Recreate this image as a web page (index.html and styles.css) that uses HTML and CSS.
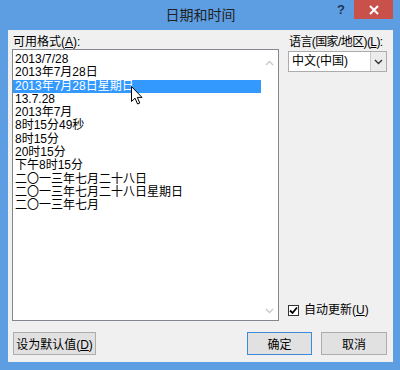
FILE: index.html
```html
<!DOCTYPE html>
<html lang="zh-CN">

<head>
    <meta charset="UTF-8">
    <title>日期和时间</title>
    <link rel="stylesheet" href="styles.css">
</head>

<body>
    <div class="window">
        <div class="titlebar">
            <span></span>
            <span class="title">日期和时间</span>
            <div class="controls">
                <span class="help">?</span>
                <span class="close">
                    <svg width="10" height="10" viewBox="0 0 10 10">
                        <path d="M1 1 L9 9 M9 1 L1 9" stroke="#fff" stroke-width="2" />
                    </svg>
                </span>
            </div>
        </div>

        <div class="client">
            <div class="main">
                <div class="left">
                    <div class="label">可用格式(<u>A</u>):</div>
                    <div class="listbox">
                        <ul class="formats">
                            <li>2013/7/28</li>
                            <li>2013年7月28日</li>
                            <li class="selected">2013年7月28日星期日</li>
                            <li>13.7.28</li>
                            <li>2013年7月</li>
                            <li>8时15分49秒</li>
                            <li>8时15分</li>
                            <li>20时15分</li>
                            <li>下午8时15分</li>
                            <li>二〇一三年七月二十八日</li>
                            <li>二〇一三年七月二十八日星期日</li>
                            <li>二〇一三年七月</li>
                        </ul>
                        <div class="scrollbar">
                            <svg width="9" height="6" viewBox="0 0 9 6">
                                <path d="M1 5 L4.5 1.5 L8 5" fill="none" stroke="#c8c8c8" stroke-width="1.3" />
                            </svg>
                            <svg width="9" height="6" viewBox="0 0 9 6">
                                <path d="M1 1 L4.5 4.5 L8 1" fill="none" stroke="#c8c8c8" stroke-width="1.3" />
                            </svg>
                        </div>
                    </div>
                </div>

                <div class="right">
                    <div class="label label-tight">语言(国家/地区)(<u>L</u>):</div>
                    <div class="select">
                        <span class="select-value">中文(中国)</span>
                        <span class="select-arrow">
                            <svg width="9" height="6" viewBox="0 0 9 6">
                                <path d="M1 1 L4.5 4.5 L8 1" fill="none" stroke="#333" stroke-width="1.4" />
                            </svg>
                        </span>
                    </div>
                    <div class="spacer"></div>
                    <label class="check">
                        <span class="box">
                            <svg width="9" height="9" viewBox="0 0 9 9">
                                <path d="M1 4.5 L3.5 7 L8 1.5" fill="none" stroke="#000" stroke-width="1.8" />
                            </svg>
                        </span>
                        <span>自动更新(<u>U</u>)</span>
                    </label>
                </div>
            </div>

            <div class="buttons">
                <button class="btn btn-wide">设为默认值(<u>D</u>)</button>
                <div class="spacer"></div>
                <button class="btn btn-default">确定</button>
                <button class="btn">取消</button>
            </div>

            <svg class="cursor" width="12" height="19" viewBox="0 0 12 19">
                <path d="M0.5 0.5 L0.5 15.5 L4 12.2 L6.6 18 L8.8 17 L6.3 11.4 L11 11.4 Z" fill="#fff" stroke="#000" stroke-width="1" stroke-linejoin="round" />
            </svg>
        </div>
    </div>
</body>

</html>
```

FILE: styles.css
```css
body {
    margin: 0;
    font-family: "Liberation Sans", "Noto Sans CJK SC", sans-serif;
    font-size: 12px;
    color: #000;
}

.window {
    width: 400px;
    height: 370px;
    box-sizing: border-box;
    padding: 0 7px 8px 8px;
    background-color: #5d9ee2;
    display: flex;
    flex-direction: column;
}

.titlebar {
    height: 30px;
    display: grid;
    grid-template-columns: 1fr auto 1fr;
    align-items: start;
}

.title {
    padding-top: 5px;
    font-family: "Noto Sans CJK SC", sans-serif;
    font-size: 14px;
    line-height: 18px;
    color: #222;
}

.controls {
    display: flex;
    justify-content: flex-end;
}

.help {
    margin-top: 2px;
    margin-right: 9px;
    font-weight: bold;
    font-size: 13px;
    color: #1d3557;
}

.close {
    width: 39px;
    height: 19px;
    background-color: #c8514c;
    display: flex;
    align-items: center;
    justify-content: center;
}

.client {
    position: relative;
    flex: 1;
    background-color: #f0f0f0;
    padding: 5px 6px 7px 4px;
    display: flex;
    flex-direction: column;
}

.main {
    display: flex;
    gap: 9px;
    height: 286px;
}

.left {
    width: 267px;
    display: flex;
    flex-direction: column;
}

.label {
    height: 14px;
    line-height: 14px;
    padding-left: 1px;
    white-space: nowrap;
}

.label-tight {
    letter-spacing: -0.6px;
}

.listbox {
    height: 272px;
    box-sizing: border-box;
    border: 1px solid #828790;
    background-color: #fff;
    display: flex;
}

.formats {
    flex: 1;
    list-style: none;
    margin: 0;
    padding: 3px 0 0 0;
}

.formats li {
    height: 13.3px;
    line-height: 13.3px;
    padding-left: 2px;
    white-space: nowrap;
}

.formats li.selected {
    background-color: #3399ff;
    color: #fff;
}

.scrollbar {
    width: 17px;
    display: flex;
    flex-direction: column;
    justify-content: space-between;
    align-items: center;
    padding: 10px 0 6px 0;
}

.right {
    width: 99px;
    display: flex;
    flex-direction: column;
}

.select {
    margin-top: 2px;
    height: 21px;
    box-sizing: border-box;
    border: 1px solid #acacac;
    background-color: #fff;
    display: flex;
}

.select-value {
    flex: 1;
    padding-left: 3px;
    line-height: 19px;
}

.select-arrow {
    width: 15px;
    border-left: 1px solid #c8c8c8;
    background-color: #ececec;
    display: flex;
    align-items: center;
    justify-content: center;
}

.spacer {
    flex: 1;
}

.check {
    display: flex;
    align-items: center;
    gap: 5px;
    margin-bottom: 4px;
    line-height: 14px;
}

.box {
    width: 11px;
    height: 11px;
    box-sizing: border-box;
    border: 1px solid #333;
    background-color: #fff;
    display: flex;
    align-items: center;
    justify-content: center;
}

.buttons {
    margin-top: 11px;
    display: flex;
    gap: 9px;
    padding-left: 1px;
}

.btn {
    height: 23px;
    width: 66px;
    padding: 0;
    border: 1px solid #adadad;
    background-color: #e1e1e1;
    font-family: "Liberation Sans", "Noto Sans CJK SC", sans-serif;
    font-size: 12px;
    color: #000;
}

.btn-wide {
    width: 83px;
}

.btn-default {
    width: 65px;
    border-color: #3c8ad8;
}

.cursor {
    position: absolute;
    left: 123px;
    top: 56px;
}
```
